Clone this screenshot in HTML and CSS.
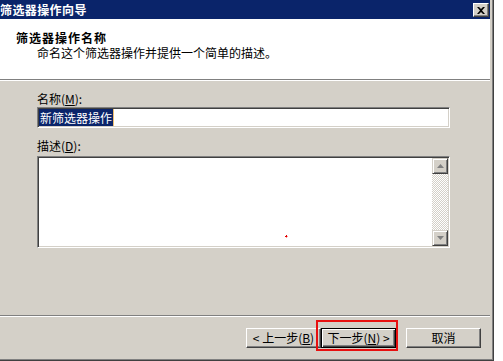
FILE: index.html
```html
<!DOCTYPE html>
<html lang="zh-CN">
<head>
<meta charset="utf-8">
<title>筛选器操作向导</title>
<link rel="stylesheet" href="styles.css">
</head>
<body>
<div class="window">
  <div class="frame">
    <div class="inner">
      <div class="titlebar">
        <span class="title">筛选器操作向导</span>
        <div class="close">
          <svg width="8" height="7" viewBox="0 0 8 7"><path d="M0 0h2l2 2 2-2h2L5 3.5 8 7H6L4 5 2 7H0l3-3.5z" fill="#000"/></svg>
        </div>
      </div>
      <div class="header">
        <div class="h-title">筛选器操作名称</div>
        <div class="h-sub">命名这个筛选器操作并提供一个简单的描述。</div>
      </div>
      <div class="etch"></div>
      <div class="body">
        <div class="label">名称(<u>M</u>):</div>
        <div class="field input"><span class="sel">新筛选器操作</span><span class="caret"></span></div>
        <div class="label label2">描述(<u>D</u>):</div>
        <div class="field textarea">
          <div class="text-area"><span class="dot"></span></div>
          <div class="scrollbar">
            <div class="sbtn"><svg width="7" height="5" viewBox="0 0 7 5"><path d="M3.5 0L7 4H0z" fill="#808080"/></svg></div>
            <div class="track"></div>
            <div class="sbtn"><svg width="7" height="5" viewBox="0 0 7 5"><path d="M0 0h7L3.5 4z" fill="#808080"/></svg></div>
          </div>
        </div>
      </div>
      <div class="etch"></div>
      <div class="footer">
        <div class="btn">&lt; 上一步(<u>B</u>)</div>
        <div class="btn default">下一步(<u>N</u>) &gt;</div>
        <div class="btn cancel">取消</div>
        <div class="highlight"></div>
      </div>
    </div>
  </div>
</div>
</body>
</html>
```

FILE: styles.css
```css
* {
  box-sizing: border-box;
  margin: 0;
  padding: 0;
}

html, body {
  background: #fff;
}

body {
  width: 503px;
  height: 361px;
  overflow: hidden;
  font-family: "Noto Sans CJK SC", "Liberation Sans", sans-serif;
  font-size: 12px;
  line-height: 14px;
  color: #000;
}

.window {
  width: 494px;
  height: 361px;
  border-right: 1px solid #404040;
  border-bottom: 1px solid #404040;
}

.frame {
  height: 100%;
  border-right: 1px solid #808080;
  border-bottom: 1px solid #808080;
}

.inner {
  height: 100%;
  border-right: 2px solid #d4d0c8;
  border-bottom: 2px solid #d4d0c8;
  background: #d4d0c8;
  display: flex;
  flex-direction: column;
}

.titlebar {
  height: 19px;
  flex: none;
  background: #0a246a;
  display: flex;
  justify-content: space-between;
  align-items: flex-start;
}

.title {
  color: #fff;
  font-weight: bold;
  letter-spacing: 0.4px;
  line-height: 19px;
  margin-left: 0;
}

.close {
  width: 16px;
  height: 14px;
  margin-top: 3px;
  margin-right: 1px;
  background: #d4d0c8;
  border: 1px solid;
  border-color: #fff #404040 #404040 #fff;
  box-shadow: inset -1px -1px #808080;
  display: flex;
  align-items: center;
  justify-content: center;
}

.close svg {
  display: block;
  margin-left: -1px;
}

.header {
  height: 60px;
  flex: none;
  background: #fff;
  padding: 12px 0 0 16px;
}

.h-title {
  font-weight: bold;
  letter-spacing: 1px;
}

.h-sub {
  margin-top: 1px;
  padding-left: 21px;
}

.etch {
  height: 2px;
  flex: none;
  border-top: 1px solid #808080;
  border-bottom: 1px solid #fff;
}

.body {
  flex: 1;
  padding: 11px 0 0 37px;
}

.label2 {
  margin-top: 11px;
}

.field {
  width: 413px;
  background: #fff;
  border: 1px solid;
  border-color: #808080 #fff #fff #808080;
  box-shadow: inset 1px 1px #404040, inset -1px -1px #d4d0c8;
  padding: 1px;
}

.input {
  height: 21px;
  margin-top: 1px;
  display: flex;
  align-items: stretch;
}

.sel {
  background: #0a246a;
  color: #fff;
  line-height: 17px;
  padding: 0 1px 0 1px;
}

.caret {
  width: 1px;
  background: #f0c070;
}

.textarea {
  height: 92px;
  margin-top: 3px;
  display: flex;
}

.text-area {
  flex: 1;
  position: relative;
}

.dot {
  position: absolute;
  left: 246px;
  top: 77px;
  width: 3px;
  height: 3px;
  background: radial-gradient(circle, #e00000 0 1px, #ff9090 1px);
  clip-path: polygon(33% 0, 67% 0, 67% 33%, 100% 33%, 100% 67%, 67% 67%, 67% 100%, 33% 100%, 33% 67%, 0 67%, 0 33%, 33% 33%);
}

.scrollbar {
  width: 16px;
  display: flex;
  flex-direction: column;
}

.sbtn {
  height: 16px;
  flex: none;
  background: #d4d0c8;
  border: 1px solid;
  border-color: #d4d0c8 #404040 #404040 #d4d0c8;
  box-shadow: inset 1px 1px #fff, inset -1px -1px #808080;
  display: flex;
  align-items: center;
  justify-content: center;
}

.sbtn svg {
  display: block;
}

.track {
  flex: 1;
  background: repeating-conic-gradient(#d4d0c8 0 25%, #fff 0 50%) 0 0 / 2px 2px;
}

.footer {
  flex: none;
  height: 40px;
  position: relative;
  display: flex;
  justify-content: flex-end;
  align-items: flex-start;
  padding: 11px 9px 0 0;
}

.btn {
  width: 75px;
  height: 20px;
  background: #d4d0c8;
  border: 1px solid;
  border-color: #fff #404040 #404040 #fff;
  box-shadow: inset -1px -1px #808080;
  text-align: center;
  line-height: 17px;
}

.btn.default {
  border-color: #000;
  box-shadow: inset 1px 1px #fff, inset -1px -1px #404040, inset -2px -2px #808080;
}

.btn.cancel {
  margin-left: 10px;
}

.highlight {
  position: absolute;
  left: 316px;
  top: 3px;
  width: 82px;
  height: 31px;
  border: 2px solid #e81010;
}
```
